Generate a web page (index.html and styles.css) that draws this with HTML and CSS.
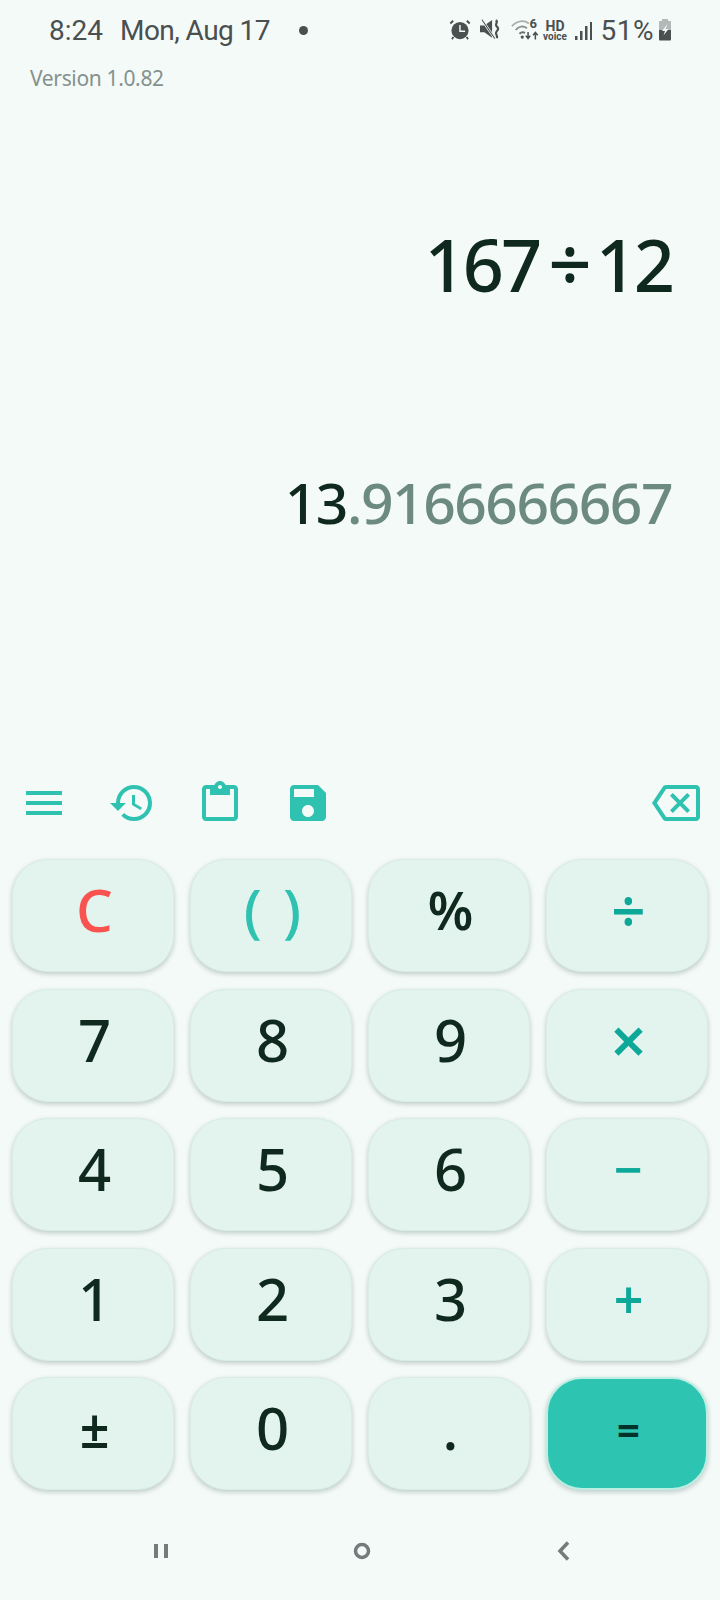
FILE: index.html
```html
<!DOCTYPE html>
<html lang="en">
<head>
<meta charset="utf-8">
<title>Calculator</title>
<link rel="stylesheet" href="styles.css">
</head>
<body>
<div class="screen">
  <header class="status">
    <div class="status-left">
      <span class="time">8:24</span>
      <span class="date">Mon, Aug 17</span>
      <span class="notif-dot"></span>
    </div>
    <div class="status-right">
      <svg class="si si-alarm" viewBox="0 0 20 20"><path d="M3.200 1 .6 3.400l1.200 1.300 2.600-2.400zM16.800 1l-1.200 1.300 2.600 2.400 1.200-1.300z"/><circle cx="10" cy="10.500" r="7.800"/><path d="M3.300 15.800 2 18l1.300.8 1.500-2.200zM16.700 15.800 18 18l-1.300.8-1.500-2.200z"/><path d="M9.300 5.500h1.300v5h4v1.300H9.300z" fill="#f4faf8"/></svg>
      <svg class="si si-mute" viewBox="0 0 20 20"><path d="M0 6h4L11 1v16L4 12H0z"/><path d="M1 1 13 18.500l1.300-.9L2.300.1z" stroke="#f4faf8" stroke-width=".8"/><path d="M14.500 1c2.500 2.500-1.500 3.500.5 5.500s2 2.500 0 5 1.500 3 .5 6" fill="none" stroke="#4a4f4f" stroke-width="2"/></svg>
      <svg class="si si-wifi" viewBox="0 0 32 22"><path d="M1 7C6 1 14 0 19 4" fill="none" stroke="#a9aeae" stroke-width="2"/><path d="M5 11c3-4 8-5 12-2" fill="none" stroke="#8c9191" stroke-width="2"/><path d="M9 15c2-2 4-2 6-1" fill="none" stroke="#6b7070" stroke-width="2"/><circle cx="12" cy="18.500" r="1.700" fill="#4a4f4f"/><path d="M18.200 13v6M15.800 17l2.400 3 2.400-3M26 21v-7M23.500 16.500l2.500-3 2.500 3" fill="none" stroke="#4a4f4f" stroke-width="1.600"/></svg>
      <span class="si-six">6</span>
      <span class="hd"><b class="hd-top">HD</b><b class="hd-bottom">voice</b></span>
      <svg class="si si-signal" viewBox="0 0 18 20"><path d="M0 15h2.500v4H0zM5 10h2.500v9H5zM10 5h2.500v14H10zM15 1h2v18h-2z"/></svg>
      <span class="battery-text">51%</span>
      <svg class="si si-batt" viewBox="0 0 14 22"><path d="M4 0h6v2H4z" fill="#b4b8b8"/><path d="M1 2h12v9H1z" fill="#b4b8b8"/><path d="M1 11h12v9.500a1 1 0 0 1-1 1H2a1 1 0 0 1-1-1z" fill="#4a4f4f"/><path d="m9.500 5-5.500 7h3l-1.500 4.500 5-6.500H7.500z" fill="#f4faf8"/></svg>
    </div>
  </header>

  <div class="version">Version 1.0.82</div>

  <main class="display">
    <div class="expr">167<span class="expr-op">÷</span>12</div>
    <div class="result">13<span class="result-dec">.9166666667</span></div>
  </main>

  <nav class="tools">
    <svg class="tool" viewBox="0 0 24 24"><path d="M3 6h18v2H3zm0 5h18v2H3zm0 5h18v2H3z"/></svg>
    <svg class="tool" viewBox="0 0 24 24"><path d="M13 3a9 9 0 0 0-9 9H1l3.890 3.890.07.14L9 12H6c0-3.870 3.130-7 7-7s7 3.130 7 7-3.130 7-7 7c-1.930 0-3.680-.79-4.940-2.060l-1.420 1.420A8.954 8.954 0 0 0 13 21a9 9 0 0 0 0-18zm-1 5v5l4.280 2.540.72-1.210-3.500-2.080V8H12z"/></svg>
    <svg class="tool" viewBox="0 0 24 24"><path d="M19 3h-4.180C14.400 1.840 13.300 1 12 1c-1.300 0-2.400.84-2.820 2H5c-1.100 0-2 .9-2 2v14c0 1.100.9 2 2 2h14c1.100 0 2-.9 2-2V5c0-1.100-.9-2-2-2zm-7 0c.55 0 1 .45 1 1s-.45 1-1 1-1-.45-1-1 .45-1 1-1zm7 16H5V5h2v3h10V5h2v14z"/></svg>
    <svg class="tool" viewBox="0 0 24 24"><path d="M17 3H5c-1.110 0-2 .9-2 2v14c0 1.100.89 2 2 2h14c1.100 0 2-.9 2-2V7l-4-4zm-5 16c-1.660 0-3-1.340-3-3s1.340-3 3-3 3 1.340 3 3-1.340 3-3 3zm3-10H5V5h10v4z"/></svg>
    <svg class="tool tool-back" viewBox="0 0 24 24"><path d="M22 3H7c-.69 0-1.230.35-1.590.88L0 12l5.410 8.110c.36.53.9.89 1.590.89h15c1.100 0 2-.9 2-2V5c0-1.100-.9-2-2-2zm0 16H7.070L2.400 12l4.660-7H22v14zm-11.590-2L14 13.410 17.590 17 19 15.590 15.410 12 19 8.410 17.590 7 14 10.590 10.410 7 9 8.410 12.590 12 9 15.590z"/></svg>
  </nav>

  <section class="keypad">
    <div class="key key-clear">C</div>
    <div class="key key-paren">( )</div>
    <div class="key key-pct">%</div>
    <div class="key key-op key-div">÷</div>
    <div class="key">7</div>
    <div class="key">8</div>
    <div class="key">9</div>
    <div class="key key-op key-mul">×</div>
    <div class="key">4</div>
    <div class="key">5</div>
    <div class="key">6</div>
    <div class="key key-op key-sub">−</div>
    <div class="key">1</div>
    <div class="key">2</div>
    <div class="key">3</div>
    <div class="key key-op key-add">+</div>
    <div class="key key-sign">±</div>
    <div class="key">0</div>
    <div class="key">.</div>
    <div class="key key-eq">=</div>
  </section>

  <footer class="navbar">
    <svg class="nav-icon" viewBox="0 0 24 24"><path d="M5 5h4v14H5zM15 5h4v14h-4z"/></svg>
    <svg class="nav-icon" viewBox="0 0 24 24"><circle cx="12" cy="12" r="6.500" fill="none" stroke="#757a7a" stroke-width="3.500"/></svg>
    <svg class="nav-icon" viewBox="0 0 24 24"><path d="M17 3.500 9 12l8 8.500" fill="none" stroke="#757a7a" stroke-width="3.500"/></svg>
  </footer>
</div>
</body>
</html>
```

FILE: styles.css
```css
* { box-sizing: border-box; }
html, body { margin: 0; padding: 0; }
body { background: #f4faf8; font-family: "Noto Sans", "Open Sans", sans-serif; }

.screen {
  width: 720px;
  height: 1600px;
  display: flex;
  flex-direction: column;
  overflow: hidden;
  background: #f4faf8;
}

.status {
  height: 60px;
  display: flex;
  align-items: center;
  justify-content: space-between;
  padding: 0 48px 0 49px;
  color: #4a4f4f;
  font-family: Roboto, sans-serif;
  font-size: 28px;
}
.status-left { display: flex; align-items: center; }
.time { margin-right: 17px; }
.date { letter-spacing: -.55px; }
.notif-dot {
  width: 9px;
  height: 9px;
  margin-left: 29px;
  border-radius: 50%;
  background: #4a4f4f;
}
.status-right { display: flex; align-items: center; }
.si { display: block; fill: #4a4f4f; }
.si-alarm { width: 22px; height: 22px; margin-right: 9px; }
.si-mute { width: 22px; height: 22px; margin-right: 9px; }
.si-wifi { width: 30px; height: 22px; }
.si-six { font-size: 13px; font-weight: 700; margin-left: -11px; margin-top: -14px; width: 10px; }
.hd { display: flex; flex-direction: column; align-items: center; margin-left: 4px; width: 23px; line-height: 1; }
.hd-top { font-size: 14px; font-weight: 700; }
.hd-bottom { font-size: 10px; font-weight: 700; margin-top: -1px; }
.si-signal { width: 18px; height: 20px; margin-left: 8px; margin-top: 2px; }
.battery-text { font-size: 28px; margin-left: 8px; letter-spacing: .5px; }
.si-batt { width: 14px; height: 22px; margin-left: 4px; }

.version {
  height: 36px;
  line-height: 36px;
  padding-left: 30px;
  font-size: 21px;
  letter-spacing: -.35px;
  color: #84918e;
}

.display {
  height: 683px;
  padding-right: 48px;
  text-align: right;
  color: #10291f;
  font-weight: 500;
}
.expr {
  margin-top: 117px;
  height: 100px;
  line-height: 100px;
  font-size: 72px;
  letter-spacing: -3px;
}
.expr-op { margin: 0 7px 0 9px; font-size: 76px; }
.result {
  margin-top: 149px;
  height: 80px;
  line-height: 80px;
  font-size: 57px;
  letter-spacing: -1.5px;
}
.result-dec { color: #6c8a80; }

.tools {
  height: 48px;
  display: flex;
  gap: 40px;
  padding: 0 20px;
}
.tool { width: 48px; height: 48px; flex: none; fill: #2fc2b0; }
.tool-back { margin-left: auto; }

.keypad {
  margin-top: 32px;
  padding: 0 12px;
  display: grid;
  grid-template-columns: repeat(4, 162px);
  grid-template-rows: repeat(5, 113px);
  column-gap: 16px;
  row-gap: 16.5px;
}
.key {
  display: flex;
  align-items: center;
  justify-content: center;
  padding: 0 0 12px 3px;
  border-radius: 36px;
  background: #e3f4ef;
  border: 1px solid #d9ece6;
  box-shadow: 0 2px 5px rgba(70, 100, 92, .32);
  color: #10291f;
  font-size: 58px;
  font-weight: 500;
}
.key-clear { color: #f9534f; }
.key-paren { color: #2fc2b0; word-spacing: 6px; }
.key-pct { font-size: 52px; font-weight: 600; }
.key-op { color: #0ea899; font-weight: 600; }
.key-div { font-size: 60px; }
.key-mul { font-size: 64px; }
.key-sub { font-size: 50px; }
.key-add { font-size: 52px; }
.key-sign { font-size: 52px; font-weight: 600; }
.key-eq {
  background: #2dc5b2;
  border: 2px solid #bdeee3;
  color: #04332c;
  font-size: 40px;
  font-weight: 700;
  padding-bottom: 8px;
}

.navbar {
  margin-top: 37px;
  height: 48px;
  padding: 0 60px;
  display: grid;
  grid-template-columns: repeat(3, 201px);
  justify-items: center;
  align-items: center;
}
.nav-icon { width: 24px; height: 24px; fill: #757a7a; }
```
